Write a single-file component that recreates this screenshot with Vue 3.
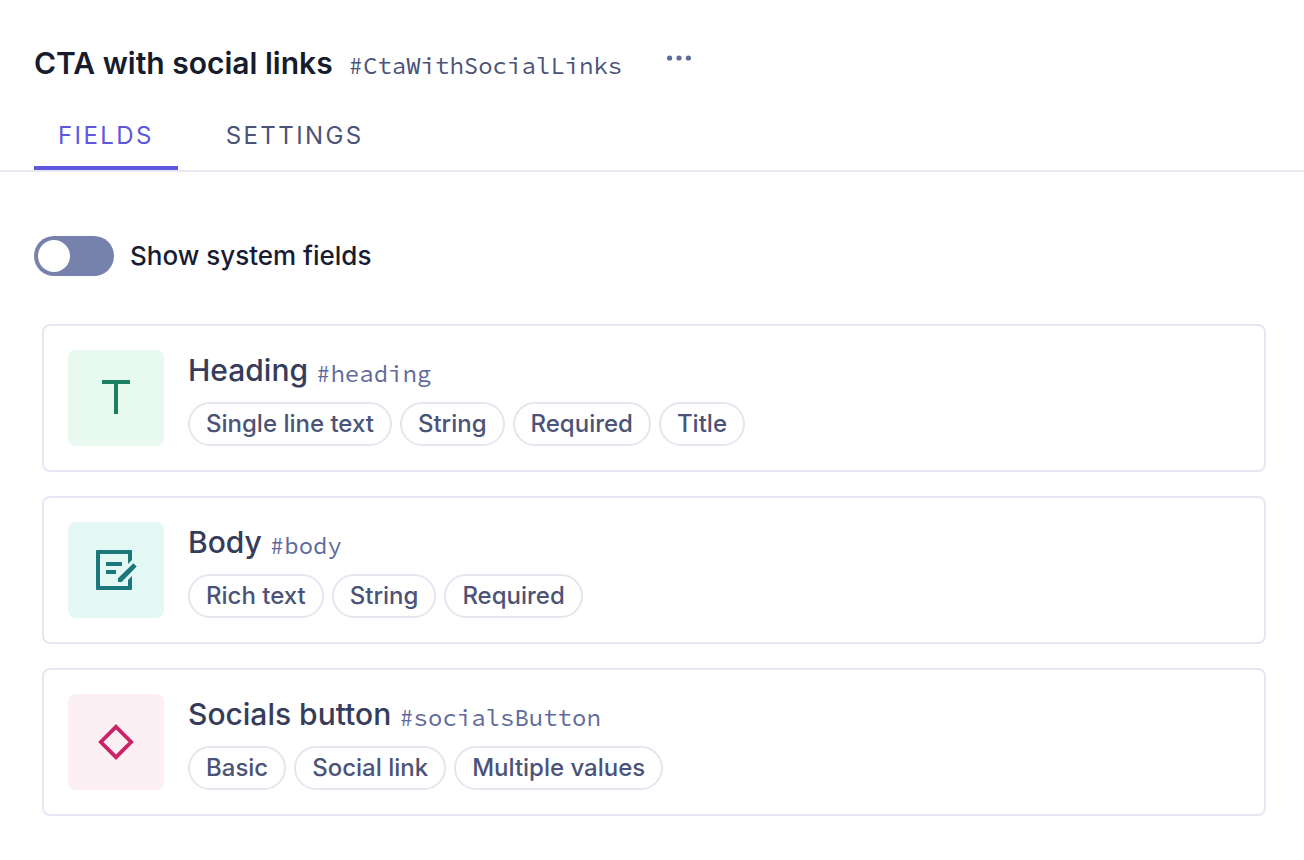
<script setup>
import { ref } from 'vue'

const activeTab = ref('Fields')
const tabs = ['Fields', 'Settings']
const showSystem = ref(false)

const fields = [
  { name: 'Heading', id: '#heading', kind: 'text', tags: ['Single line text', 'String', 'Required', 'Title'] },
  { name: 'Body', id: '#body', kind: 'rich', tags: ['Rich text', 'String', 'Required'] },
  { name: 'Socials button', id: '#socialsButton', kind: 'component', tags: ['Basic', 'Social link', 'Multiple values'] },
]
</script>

<template>
  <main class="page">
    <header class="header">
      <h1 class="title">CTA with social links</h1>
      <code class="api-id">#CtaWithSocialLinks</code>
      <button class="more" type="button" aria-label="More actions">
        <svg width="32" height="32" viewBox="0 0 32 32" fill="currentColor" aria-hidden="true">
          <circle cx="6.6" cy="15" r="2.6" />
          <circle cx="16" cy="15" r="2.6" />
          <circle cx="25.4" cy="15" r="2.6" />
        </svg>
      </button>
    </header>

    <nav class="tabs" role="tablist">
      <button
        v-for="tab in tabs"
        :key="tab"
        type="button"
        role="tab"
        class="tab"
        :class="{ active: activeTab === tab }"
        :aria-selected="activeTab === tab"
        @click="activeTab = tab"
      >{{ tab }}</button>
    </nav>

    <label class="switch">
      <input v-model="showSystem" class="switch-input" type="checkbox" role="switch" />
      <span>Show system fields</span>
    </label>

    <ul class="list">
      <li v-for="field in fields" :key="field.id" class="card">
        <div class="tile" :class="field.kind">
          <svg width="48" height="48" viewBox="0 0 48 48" fill="currentColor" aria-hidden="true">
            <path v-if="field.kind === 'text'" d="M10 6h28v4H26v30h-4V10H10z" />
            <template v-else-if="field.kind === 'rich'">
              <path d="M5 4H39a1 1 0 0 1 1 1V14L36 18V8H8V40H36V34L40 30V43a1 1 0 0 1-1 1H5a1 1 0 0 1-1-1V5a1 1 0 0 1 1-1z" />
              <path d="M14 16h16v4H14zM14 24h10v4H14z" />
              <path d="M26 32.3L41.4 17.2L44.7 20.5L29.6 36H26z" />
            </template>
            <path v-else d="M24 8.8L39.2 24L24 39.2L8.8 24z" fill="none" stroke="currentColor" stroke-width="3.8" />
          </svg>
        </div>
        <div class="info">
          <div class="heading">
            <h2 class="name">{{ field.name }}</h2>
            <code class="field-id">{{ field.id }}</code>
          </div>
          <ul class="tags">
            <li v-for="tag in field.tags" :key="tag" class="tag">{{ tag }}</li>
          </ul>
        </div>
      </li>
    </ul>
  </main>
</template>

<style>
body {
  margin: 0;
  background: #fff;
}
</style>

<style scoped>
.page {
  font-family: Inter, "Liberation Sans", sans-serif;
  color: #171c34;
  padding-bottom: 44px;
}

.header {
  display: flex;
  align-items: baseline;
  padding: 43px 34px 0;
}

.title {
  margin: 0;
  font-size: 30px;
  line-height: 40px;
  font-weight: 600;
  color: #161b2e;
}

.api-id,
.field-id {
  font-family: "Source Code Pro", "Liberation Mono", monospace;
  font-size: 24px;
  line-height: 32px;
}

.api-id {
  margin-left: 16px;
  color: #4b5378;
}

.more {
  align-self: flex-start;
  display: flex;
  margin: 0 0 0 41px;
  padding: 0;
  border: 0;
  background: none;
  color: #5f6a9c;
  cursor: pointer;
}

.tabs {
  display: flex;
  gap: 24px;
  margin-top: 17px;
  padding: 0 34px;
  border-bottom: 2px solid #e6e9f2;
}

.tab {
  padding: 18px 24px 12px;
  border: 0;
  border-bottom: 4px solid transparent;
  background: none;
  font-family: inherit;
  font-size: 24px;
  line-height: 36px;
  font-weight: 400;
  letter-spacing: 0.1em;
  text-transform: uppercase;
  color: #4b5378;
  cursor: pointer;
}

.tab.active {
  color: #5d57e0;
  border-bottom-color: #5d57e0;
}

.switch {
  display: flex;
  align-items: center;
  gap: 16px;
  width: fit-content;
  margin: 64px 34px 0;
  font-size: 26px;
  line-height: 40px;
  font-weight: 500;
  cursor: pointer;
}

.switch-input {
  appearance: none;
  display: flex;
  align-items: center;
  box-sizing: border-box;
  width: 80px;
  height: 40px;
  margin: 0;
  padding: 4px;
  border-radius: 20px;
  background: #7782ac;
  cursor: pointer;
}

.switch-input::before {
  content: "";
  width: 32px;
  height: 32px;
  border-radius: 50%;
  background: #fff;
}

.switch-input:checked {
  justify-content: flex-end;
  background: #5d57e0;
}

.list {
  display: flex;
  flex-direction: column;
  gap: 24px;
  margin: 48px 38px 0 42px;
  padding: 0;
  list-style: none;
}

.card {
  display: flex;
  gap: 24px;
  padding: 24px;
  border: 2px solid #e5e7f3;
  border-radius: 8px;
}

.tile {
  display: flex;
  align-items: center;
  justify-content: center;
  flex: none;
  width: 96px;
  height: 96px;
  border-radius: 8px;
}

.tile.text {
  background: #e8f9ef;
  color: #1a7f60;
}

.tile.rich {
  background: #e3f7f5;
  color: #1b777c;
}

.tile.component {
  background: #fdf0f5;
  color: #cb2367;
}

.heading {
  display: flex;
  align-items: flex-end;
  gap: 8px;
}

.name {
  margin: 0;
  font-size: 30px;
  line-height: 40px;
  font-weight: 500;
  color: #363c5b;
}

.field-id {
  color: #5f6a9c;
}

.tags {
  display: flex;
  flex-wrap: wrap;
  gap: 8px;
  margin: 12px 0 0;
  padding: 0;
  list-style: none;
}

.tag {
  padding: 0 16px;
  border: 2px solid #e5e6ee;
  border-radius: 22px;
  font-size: 24px;
  line-height: 40px;
  font-weight: 500;
  color: #4b5378;
}
</style>
